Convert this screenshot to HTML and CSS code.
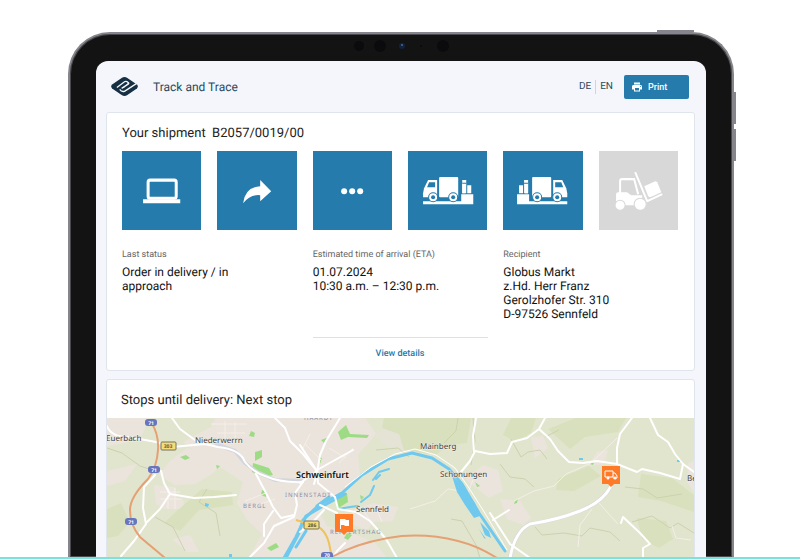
FILE: index.html
```
<!DOCTYPE html>
<html lang="en">
<head>
    <meta charset="UTF-8">
    <meta name="viewport" content="width=device-width, initial-scale=1.0">
    <title>Track and Trace</title>
    <link rel="stylesheet" href="styles.css">
</head>
<body>

<div class="tablet">
    <!-- Hardware buttons and camera -->
    <span class="key key-top"></span>
    <span class="key key-up"></span>
    <span class="key key-down"></span>
    <div class="camera">
        <svg width="98" height="14" viewBox="0 0 98 14" aria-hidden="true">
            <circle cx="7" cy="7" r="5" fill="#0b0b0d"/>
            <circle cx="28" cy="7" r="6" fill="#0b0b0d"/>
            <circle cx="50" cy="7" r="3" fill="#13233c"/>
            <circle cx="50" cy="6" r="1" fill="#356dac"/>
            <circle cx="69" cy="7" r="1" fill="#0b0b0d"/>
            <circle cx="91" cy="7" r="6" fill="#0b0b0d"/>
        </svg>
    </div>

    <div class="screen">
        <header class="header">
            <svg class="logo" viewBox="0 0 30 22" aria-hidden="true">
                <path d="M12 2 Q15 0 18 2 L28 9 Q30 11 28 13 L18 20 Q15 22 12 20 L2 13 Q0 11 2 9Z" fill="#172f43"/>
                <path d="M7 12 L15 6 Q17 5 19 7 Q20 8 18 9 L12 13 M10 14 Q12 17 15 16 L29 7 M20 7 L14 12" fill="none" stroke="#f4f6fb" stroke-width="1.4"/>
            </svg>
            <h1>Track and Trace</h1>
            <nav class="languages">
                <a href="#de">DE</a>
                <a href="#en">EN</a>
            </nav>
            <button class="print" type="button">
                <svg width="12" height="12" viewBox="0 0 24 24" fill="#fff" aria-hidden="true">
                    <path d="M19 8H5c-1.7 0-3 1.300-3 3v6h4v4h12v-4h4v-6c0-1.700-1.300-3-3-3zm-3 11H8v-5h8v5zm3-7a1 1 0 1 1 0-2 1 1 0 0 1 0 2zM18 3H6v4h12V3z"/>
                </svg>
                Print
            </button>
        </header>

        <main>
            <section class="card shipment">
                <h2>Your shipment &nbsp;B2057/0019/00</h2>

                <div class="steps">
                    <div class="step">
                        <svg viewBox="0 0 79 79" aria-hidden="true">
                            <rect x="26" y="29" width="28" height="18" rx="2" fill="none" stroke="#fff" stroke-width="3"/>
                            <path d="M21 48h37v4H21z" fill="#fff"/>
                        </svg>
                    </div>
                    <div class="step">
                        <svg viewBox="0 0 79 79" aria-hidden="true">
                            <path d="M43 29 L54 40 L43 50 V44 Q33 43 26 52 Q28 36 43 35Z" fill="#fff"/>
                        </svg>
                    </div>
                    <div class="step">
                        <svg viewBox="0 0 79 79" fill="#fff" aria-hidden="true">
                            <circle cx="31" cy="40" r="3"/>
                            <circle cx="39" cy="40" r="3"/>
                            <circle cx="47" cy="40" r="3"/>
                        </svg>
                    </div>
                    <div class="step">
                        <svg viewBox="0 0 79 79" aria-hidden="true">
                            <g id="loading">
                                <path d="M15 50h38v-7h12v10H15z" fill="#fff"/>
                                <rect x="31" y="26" width="19" height="20" rx="1" fill="#fff"/>
                                <path d="M20 29h9v17H15v-4l1-5z" fill="#fff"/>
                                <path d="M21 31h6v5h-8z" fill="#247bac"/>
                                <path d="M54 29h4v3h-1v10h-3zM59 34h4v8h-4z" fill="#fff"/>
                                <path d="M54 32h4v10h-4z" fill="#fff"/>
                                <path d="M54 32h4" stroke="#247bac"/>
                                <g fill="#fff" stroke="#247bac">
                                    <circle cx="25" cy="46" r="4.500"/>
                                    <circle cx="45" cy="46" r="4.500"/>
                                </g>
                                <circle cx="25" cy="46" r="2" fill="#247bac"/>
                                <circle cx="45" cy="46" r="2" fill="#247bac"/>
                            </g>
                        </svg>
                    </div>
                    <div class="step">
                        <svg viewBox="0 0 79 79" aria-hidden="true">
                            <use href="#loading" transform="translate(79 0) scale(-1 1)"/>
                        </svg>
                    </div>
                    <div class="step step-open">
                        <svg viewBox="0 0 79 79" aria-hidden="true">
                            <path d="M21 42V30q0-2 2-2h12l4 15" fill="none" stroke="#fff" stroke-width="2"/>
                            <path d="M17 43q0-2 2-2h9l4 3h11v10H17z" fill="#fff"/>
                            <path d="M36 21l12 29 15-7" fill="none" stroke="#fff" stroke-width="2"/>
                            <path d="M45 35l11-5q1 0 2 1l4 10-11 5q-1 0-2-1z" fill="#fff"/>
                            <g fill="#fff" stroke="#d8d8d8">
                                <circle cx="21" cy="54" r="5"/>
                                <circle cx="41" cy="53" r="6"/>
                            </g>
                        </svg>
                    </div>
                </div>

                <dl class="details">
                    <div>
                        <dt>Last status</dt>
                        <dd>Order in delivery / in approach</dd>
                    </div>
                    <div>
                        <dt>Estimated time of arrival (ETA)</dt>
                        <dd>01.07.2024<br>10:30 a.m. – 12:30 p.m.</dd>
                    </div>
                    <div>
                        <dt>Recipient</dt>
                        <dd>Globus Markt<br>z.Hd. Herr Franz<br>Gerolzhofer Str. 310<br>D-97526 Sennfeld</dd>
                    </div>
                </dl>

                <a class="view-details" href="#details">View details</a>
            </section>

            <section class="card stops">
                <h2>Stops until delivery: Next stop</h2>

                <svg class="map" viewBox="107 419 587 140" preserveAspectRatio="xMidYMin slice" role="img" aria-label="Map of the stops around Schweinfurt">
                    <!-- Land -->
                    <rect x="107" y="419" width="587" height="140" fill="#e1e5ce"/>
                    <g fill="#ebe4dc">
                        <path d="M107 419h42l-7 17-16 8-19 3z"/>
                        <path d="M183 443l28-15 4-9h150l11 16-18 21 2 20-25 23-15 15 7 13 18 4 30 13 13 16H248l14-25-15-14-10-17 6-21-17-11z"/>
                        <path d="M170 462l17-13 23 3 17 8-15 15-17 10-20 1-16-10z"/>
                        <path d="M154 486l21 2 2 11 7 3-1 8h-18l-9-5z"/>
                        <path d="M355 510l18-6 25 4-5 14-19 1-7 8-21-8z"/>
                        <path d="M465 480l18-14 15 5 5 21-14 7z"/>
                        <path d="M500 500l20 2 11 17-8 7-16-6z"/>
                        <path d="M597 453l11-2-4 14-16 2zM531 438l12-1 5 12-13 10z"/>
                        <path d="M688 464l6-2v31l-7-10zM172 540l18-4 9 17h-12zM107 472l30-7-12 17-18 5z"/>
                        <path d="M400 419l20 20-9 13-20-1-17-15z" fill="#e5e3d5"/>
                    </g>
                    <g fill="#d9e0bd">
                        <path d="M384 419h87l-4 25-19 2-12 10-32-5-5-16-17-6z"/>
                        <path d="M511 419h25l-5 15-15 9-13-7zM548 430l28-11h50l-8 14-33 5-15 12z"/>
                        <path d="M641 475l31 4 22 17v17l-33-11-23-4zM107 510l14-6 9 19-12 14-11 2zM637 519l29 3 7 18-14 9-17-9z"/>
                        <path d="M202 490l30 3 1 13-34 5-19 21-16-8 15-14zM558 480l31-13 12 10-27 15-18-1z"/>
                    </g>
                    <g fill="#9ddc85">
                        <path d="M251 432l4 2-1 4-5-1zM255 453l7-2v7l-7 4zM253 464l16 5 4 7-9 2-12-5zM180 458l6-2 4 3-5 2zM216 466l4 1-3 3zM262 491l5 2-1 5-5-2z"/>
                        <path d="M338 433l8-7 4 9 19 1-2 3-19-1-7 3zM321 441l8-3-5 6zM319 458l3 1-2 6zM340 493l7 1 1 9-11 7-1-9zM347 534l5 2-4 5-4-2z"/>
                        <path d="M267 549l9-5 3 4-8 4zM515 502l3-2-1 4-3 1zM591 463l3 1-1 2-3-1zM475 483l5 4-3 1zM360 496l4 2-3 3z"/>
                    </g>

                    <!-- Forest edges and tracks -->
                    <g fill="none" stroke="#ccd1ae">
                        <path d="M107 449l15 5 18 13 12 4M155 518l18 10 12 24M511 440l10 18 7-5 12-2 7 9M444 444l12-12 2-13M376 451l22-2 11 9"/>
                        <path d="M535 528l7 8 22-2 18 3 8-8 20 4 10 9M632 523l20-6 18 12 8-5 16 10M625 488l18 2 14 9 25-4M500 465l10 13 15 2 9 8"/>
                        <path d="M451 520l11 2 14 24 4 13M471 466l4-24-2-23M545 438l14-7M207 490l-8 13 17 11 4 23"/>
                    </g>
                    <g fill="none" stroke="#f4eee7">
                        <path d="M514 502l20-10 20-5 12-12 25-11 26-25M410 510l25-8 13-12 20 3 5-12M598 503l20 22M592 510l-12 16-2 22M672 527l4 12 15 2"/>
                        <path d="M211 425h36M217 434h28M225 422v20M235 423v19M160 493h20M160 500h22M168 489v21M175 489v21M245 502l21-8M249 509l26-9M305 445l16 16M329 449l17 10M353 449l-14 15M310 435l-8 16M360 507l12 17M375 506l7 17"/>
                    </g>

                    <!-- River -->
                    <g fill="none" stroke="#6fc9ef" stroke-linecap="round" stroke-linejoin="round">
                        <path d="M286 559l13-25 4-13 16-15 23-12 20-18 26-16 24-6 20 5 17 11 13 15 17 29 26 38" stroke-width="3"/>
                        <path d="M284 559l12-21 10-21 17-10 22-12" stroke-width="3"/>
                        <path d="M373 481l6-8 10-3M376 480l4-4M361 503l9-7 4-9M338 510l12-2 8-1" stroke-width="2"/>
                        <path d="M317 507l12-9M296 548l10-16" stroke-width="3"/>
                    </g>
                    <path d="M452 477l8 7 9 13 6 7 5 13-6 2-9-13-8-13zM480 523l9 9 2 7-6-3zM479 530l7 10-2-1z" fill="#6fc9ef"/>
                    <path d="M205 504l4 1-1 3-3-1zM579 459h4v2h-4zM677 461h3v2h-3zM229 555h3v3h-3z" fill="#6fc9ef"/>

                    <!-- Roads -->
                    <g fill="none" stroke="#d5d5dd" stroke-width="4" stroke-linejoin="round">
                        <path d="M215 445l20 7 10 12 12 9 18 8 28 1M611 487q-8 16-31 25t-50 13q-15 7-20 34"/>
                    </g>
                    <g fill="none" stroke="#fff" stroke-width="2" stroke-linecap="round" stroke-linejoin="round">
                        <path d="M107 427q4 11 22 11l27 5 16 5 33-3 13 3q22 2 27 15 8 10 20 14 16 7 38 6"/>
                        <path d="M172 419l8 11 15 11 9 4M275 419l10 10 5 13 13 13 14 17"/>
                        <path d="M340 419l-14 23-6 14-3 18-3 11M300 446l17 26 1 12 17 14 3 12 18 3 14 9 16 18 11 19"/>
                        <path d="M303 483l-8 11 2 12-3 12-20 9-10 17-15 15M256 475l10 19 7 14 8 11 13-3M273 512l-9 13v12"/>
                        <path d="M161 472l3 12 6 11 24 4 20-1 22-2M170 495l-10 15-14 14M155 476l-11 12-1 21 3 16-12 17-13 15"/>
                        <path d="M300 533l12-9 12-13M345 544l-8 8-4 7M320 506l17 8M317 472l-17 12M353 451l-36 20"/>
                        <path d="M345 488l26-20 24-13 20-5 21 6 19 13 12 17 16 25 24 40" stroke-width="1"/>
                        <path d="M461 473l9-11 5-10 15 3M474 453l-1-16 3-18"/>
                        <path d="M490 455l17-1 5-11 15-4 12-9 6-11M539 430l11 10 8 12 11 11 14 1 14-2 20 3 20 8 5-3 18 4 20 6 3-15"/>
                        <path d="M632 419l-12 16-3 14v16M650 419l8 17 10 7 7 12 8 10 11 8M621 524l2-6 17 16 10 11-7 4v10M493 521l16-10M490 514l20 31 20 14"/>
                        <path d="M611 487q-8 16-31 25t-50 13q-15 7-20 34" stroke-width="3"/>
                    </g>
                    <path d="M151 423q8 12 7 28-1 17-10 29-18 18-18 31 0 15 10 27l25 21M330 559q24-14 58-20t70 3q20 5 39 17" fill="none" stroke="#e5a174" stroke-width="2"/>
                    <path d="M296 521l10 3q18 1 23 20l3 15" fill="none" stroke="#edc35a" stroke-width="2"/>

                    <!-- Road numbers -->
                    <g class="motorway">
                        <rect x="145" y="420" width="12" height="7" rx="3"/><text x="151" y="426">71</text>
                        <rect x="148" y="467" width="12" height="7" rx="3"/><text x="154" y="473">71</text>
                        <rect x="125" y="519" width="12" height="7" rx="3"/><text x="131" y="525">71</text>
                        <rect x="321" y="553" width="12" height="7" rx="3"/><text x="327" y="558">70</text>
                    </g>
                    <g class="highway">
                        <rect x="161" y="443" width="15" height="8" rx="1"/><text x="168" y="449">303</text>
                        <rect x="304" y="522" width="15" height="8" rx="1"/><text x="312" y="528">286</text>
                    </g>

                    <!-- Places -->
                    <g class="place">
                        <text x="106" y="442">Euerbach</text>
                        <text x="195" y="444">Niederwerrn</text>
                        <text class="city" x="296" y="479">Schweinfurt</text>
                        <text x="420" y="450">Mainberg</text>
                        <text x="440" y="478">Schonungen</text>
                        <text x="356" y="513">Sennfeld</text>
                        <text x="687" y="482">Be</text>
                    </g>
                    <g class="district">
                        <text x="304" y="421">HAARDT</text>
                        <text x="243" y="509">BERGL</text>
                        <text x="285" y="498">INNENSTADT</text>
                        <text x="330" y="535">REPPERTSHAG</text>
                    </g>

                    <!-- Stop and truck markers -->
                    <path d="M335 515h18v18h-6l-3 3-3-3h-6z" fill="#ff7a26"/>
                    <path d="M340 520h5l1 1h3v6h-4l-1-1h-3v4h-1z" fill="#fff"/>
                    <path d="M602 467h18v18h-6l-3 3-3-3h-6z" fill="#ff7a26"/>
                    <path d="M605 472h8v6h-8zM613 474h2l2 3v2h-4" fill="none" stroke="#fff"/>
                    <g fill="#fff">
                        <circle cx="608" cy="479" r="1.500"/>
                        <circle cx="615" cy="479" r="1.500"/>
                    </g>
                </svg>
            </section>
        </main>
    </div>
</div>

</body>
</html>
```
FILE: styles.css
```
* {
    box-sizing: border-box;
}
body {
    display: flex;
    flex-direction: column;
    height: 100vh;
    margin: 0;
    padding: 32px 66px 0 68px;
    overflow: hidden;
    background-color: #fff;
    border-bottom: 2px solid #7de1dc;
    font-family: Roboto, "Liberation Sans", sans-serif;
    color: #222;
    text-rendering: geometricPrecision;
}
h1, h2, dl, dd {
    margin: 0;
    font-weight: 400;
}
a {
    color: inherit;
    text-decoration: none;
}

/* Tablet */
.tablet {
    position: relative;
    flex: 1;
    min-height: 0;
    padding: 27px 26px 0;
    background-color: #131313;
    border: 2px solid #85858b;
    border-bottom: none;
    border-radius: 42px 42px 0 0;
    box-shadow: inset 0 0 0 1px #4a4a4e;
}
.key {
    position: absolute;
    background-color: #85858b;
}
.key-top {
    top: -4px;
    right: 38px;
    width: 37px;
    height: 2px;
}
.key-up, .key-down {
    right: -4px;
    width: 2px;
    height: 32px;
}
.key-up {
    top: 58px;
}
.key-down {
    top: 95px;
}
.camera {
    position: absolute;
    top: 5px;
    left: 0;
    right: 0;
    display: flex;
    justify-content: center;
}
.screen {
    height: 100%;
    padding: 0 11px 0 10px;
    overflow: hidden;
    background-color: #f4f6fb;
    border-radius: 12px 12px 0 0;
}

/* Header */
.header {
    display: flex;
    align-items: center;
    height: 51px;
    padding: 0 6px 0 4px;
    color: #2b4a60;
}
.logo {
    width: 29px;
    height: 21px;
    margin-right: 14px;
}
.header h1 {
    flex: 1;
    font-size: 12px;
}
.languages {
    display: flex;
    font-size: 10px;
    line-height: 14px;
}
.languages a + a {
    margin-left: 4px;
    padding-left: 4px;
    border-left: 1px solid #cfd5df;
}
.print {
    display: flex;
    align-items: center;
    gap: 5px;
    width: 65px;
    height: 24px;
    margin-left: 11px;
    padding: 0 7px;
    background-color: #247bac;
    border: none;
    border-radius: 2px;
    color: #fff;
    font-family: inherit;
    font-size: 9px;
    font-weight: 500;
    cursor: pointer;
}

/* Cards */
.card {
    margin-bottom: 8px;
    background-color: #fff;
    border: 1px solid #dfe5ed;
    border-radius: 3px;
    overflow: hidden;
}
.card h2 {
    font-size: 13px;
    line-height: 18px;
}
.shipment {
    padding: 12px 16px 9px 15px;
}
.steps {
    display: grid;
    grid-template-columns: repeat(6, 1fr);
    gap: 16px;
    margin-top: 8px;
}
.step {
    background-color: #247bac;
}
.step-open {
    background-color: #d8d8d8;
}
.step svg {
    display: block;
    width: 100%;
}
.details {
    display: grid;
    grid-template-columns: repeat(3, 1fr);
    gap: 16px;
    margin-top: 18px;
}
.details dt {
    margin-bottom: 3px;
    color: #666;
    font-size: 9px;
    line-height: 14px;
}
.details dd {
    max-width: 130px;
    color: #111;
    font-size: 12px;
    line-height: 14px;
}
.view-details {
    display: block;
    width: 175px;
    margin: 16px auto 0;
    padding-top: 9px;
    border-top: 1px solid #dde0e4;
    color: #247bac;
    font-size: 9px;
    font-weight: 500;
    line-height: 14px;
    text-align: center;
}
.stops h2 {
    padding: 12px 14px 8px;
}

/* Map */
.map {
    display: block;
    width: 100%;
    font-family: "Noto Sans", sans-serif;
}
.place {
    fill: #414141;
    stroke: #f2f0e5;
    stroke-width: 1px;
    paint-order: stroke;
    font-size: 8px;
}
.city {
    fill: #111;
    font-size: 9px;
    font-weight: 600;
}
.district {
    fill: #8790ae;
    font-size: 6px;
    letter-spacing: 1px;
}
.motorway rect {
    fill: #6675bd;
}
.motorway text, .highway text {
    fill: #fff;
    font-size: 5px;
    font-weight: 700;
    text-anchor: middle;
}
.highway rect {
    fill: #f5dc78;
    stroke: #77735c;
}
.highway text {
    fill: #5d5737;
}
```
